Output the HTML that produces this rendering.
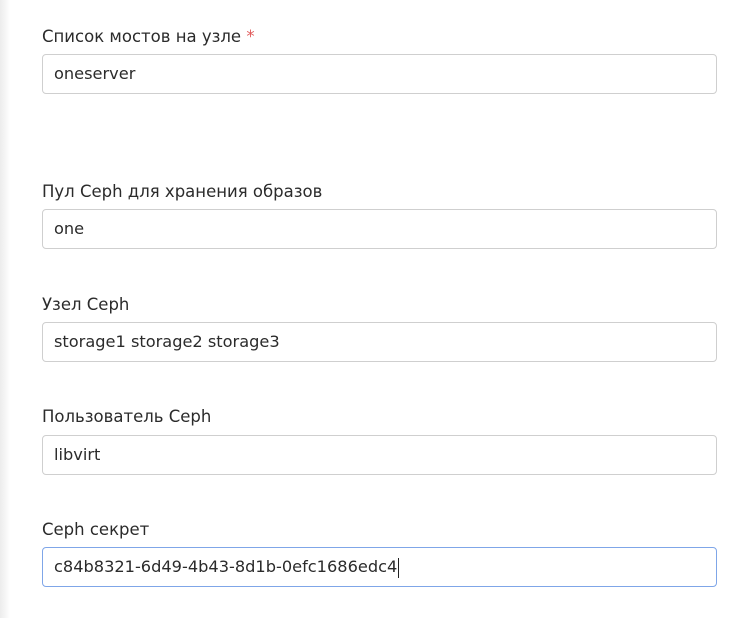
<!DOCTYPE html>
<html><head><meta charset="utf-8"><style>
html,body{margin:0;padding:0;width:742px;height:618px;overflow:hidden;background:#fff;font-family:"DejaVu Sans","Liberation Sans",sans-serif;color:#2b2b2b}
.edge{position:absolute;left:0;top:0;width:10px;height:618px;background:linear-gradient(to right,#ececec,#fff)}
.l{position:absolute;left:42px;font-size:16.5px;line-height:20px;white-space:nowrap}
.l span{color:#e05a5a}
.i{position:absolute;left:42px;height:38px;border:1px solid #cfcfcf;border-radius:4px;box-sizing:content-box;font-size:16.2px;line-height:38px;padding-left:11px;width:662px;white-space:nowrap}
.f{border-color:#7fa6e8}
.c{display:inline-block;width:1px;height:20px;background:#222;vertical-align:middle;margin-left:1px}
</style></head><body>
<div class="edge"></div>
<div class="l" style="top:27px">Список мостов на узле <span>*</span></div>
<div class="i" style="top:54px">oneserver</div>
<div class="l" style="top:182px">Пул Ceph для хранения образов</div>
<div class="i" style="top:209px">one</div>
<div class="l" style="top:295px">Узел Ceph</div>
<div class="i" style="top:322px">storage1 storage2 storage3</div>
<div class="l" style="top:407px">Пользователь Ceph</div>
<div class="i" style="top:435px">libvirt</div>
<div class="l" style="top:520px">Ceph секрет</div>
<div class="i f" style="top:547px">c84b8321-6d49-4b43-8d1b-0efc1686edc4<span class="c"></span></div>
</body></html>
